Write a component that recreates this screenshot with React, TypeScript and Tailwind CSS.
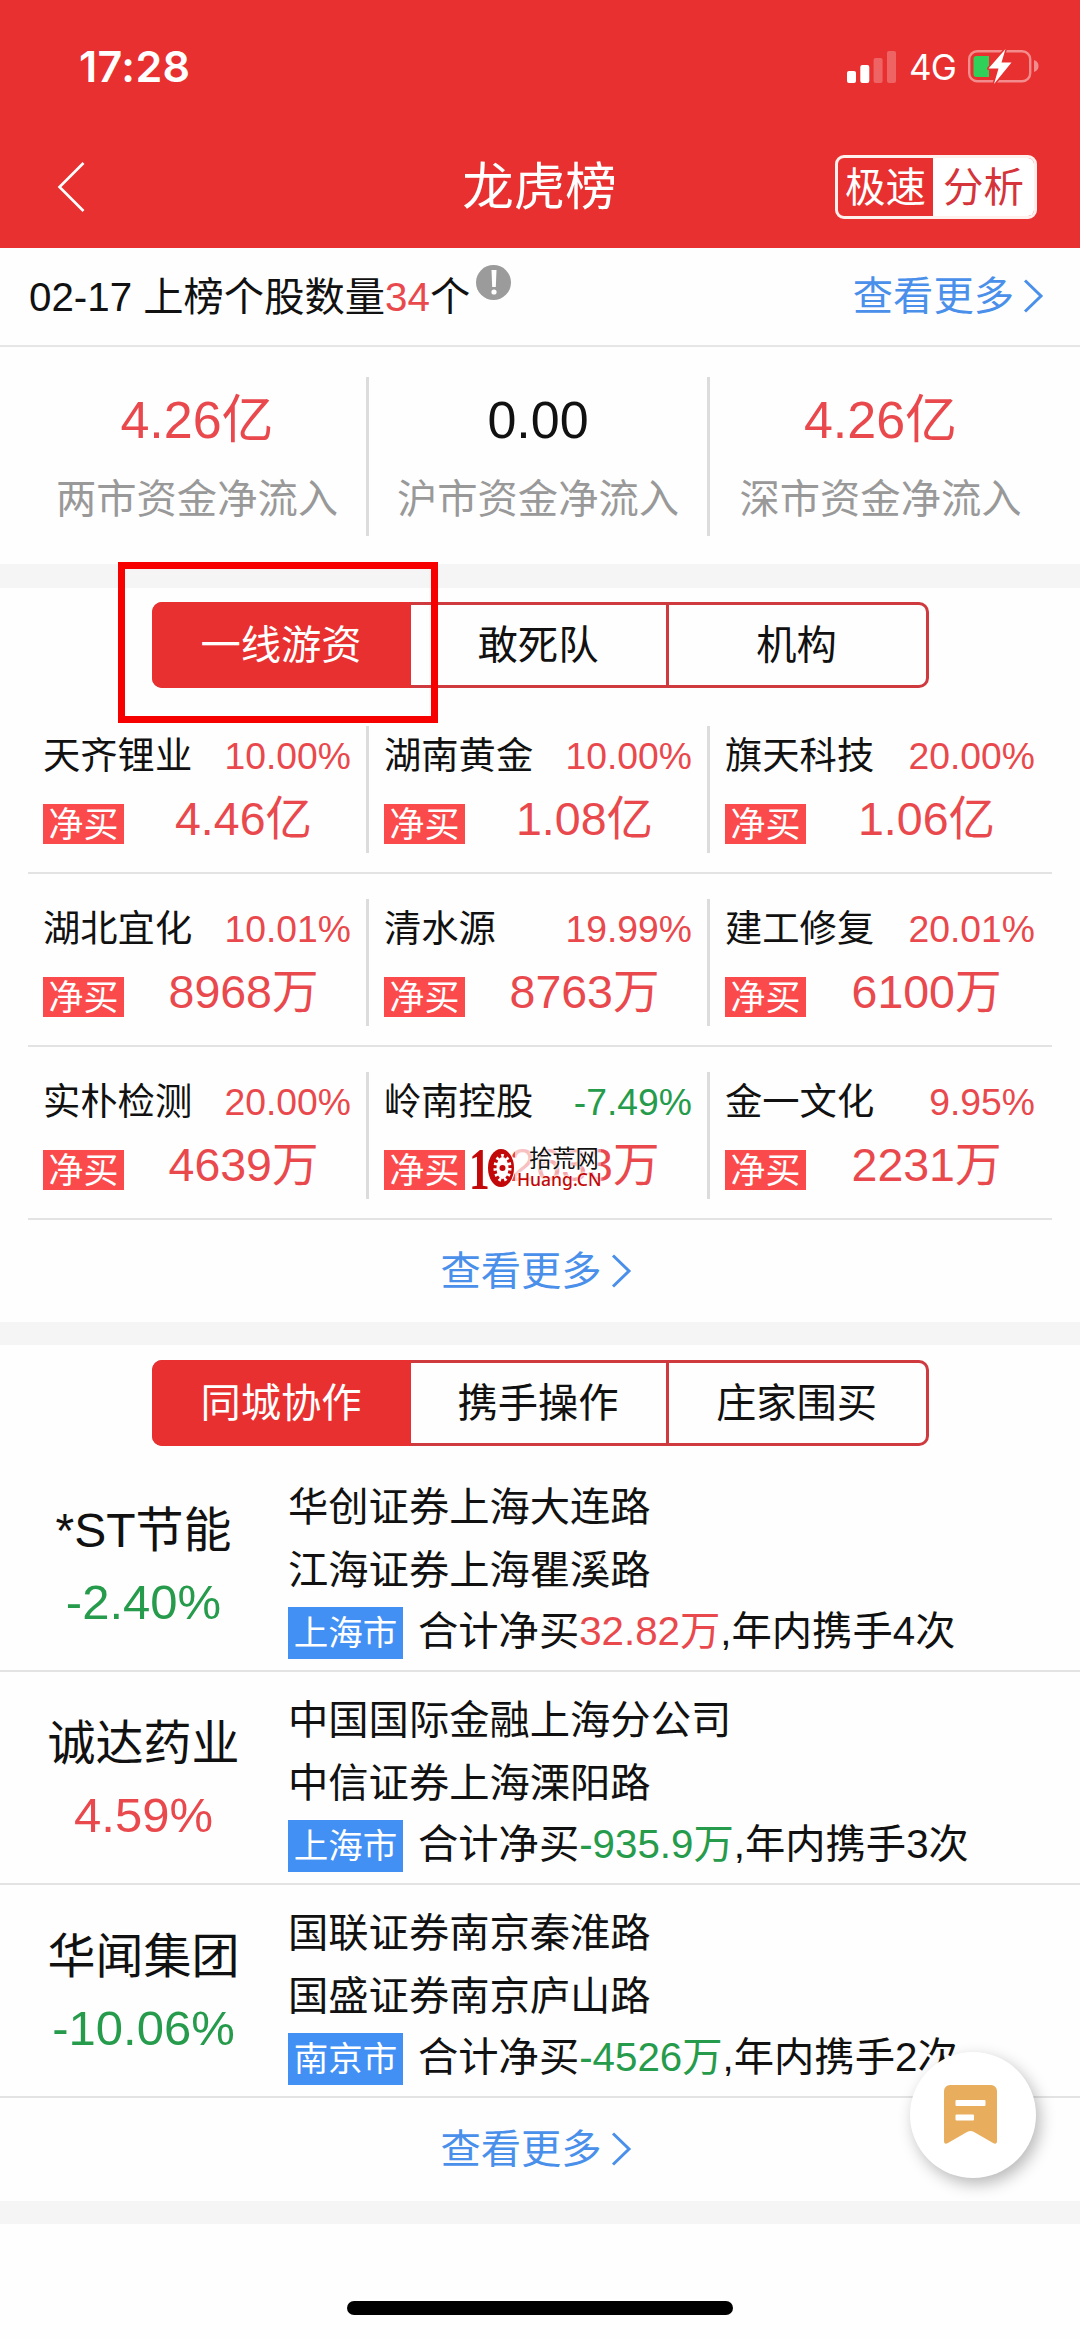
import { useState } from "react";
import clsx from "clsx";

type Stock = { name: string; change: string; amount: string };

type Partner = {
  name: string;
  change: string;
  brokers: string[];
  city: string;
  total: string;
  times: number;
};

const summary = [
  { label: "两市资金净流入", value: "4.26亿", up: true },
  { label: "沪市资金净流入", value: "0.00", up: false },
  { label: "深市资金净流入", value: "4.26亿", up: true },
];

const stockRows: Stock[][] = [
  [
    { name: "天齐锂业", change: "10.00%", amount: "4.46亿" },
    { name: "湖南黄金", change: "10.00%", amount: "1.08亿" },
    { name: "旗天科技", change: "20.00%", amount: "1.06亿" },
  ],
  [
    { name: "湖北宜化", change: "10.01%", amount: "8968万" },
    { name: "清水源", change: "19.99%", amount: "8763万" },
    { name: "建工修复", change: "20.01%", amount: "6100万" },
  ],
  [
    { name: "实朴检测", change: "20.00%", amount: "4639万" },
    { name: "岭南控股", change: "-7.49%", amount: "2633万" },
    { name: "金一文化", change: "9.95%", amount: "2231万" },
  ],
];

const partners: Partner[] = [
  {
    name: "*ST节能",
    change: "-2.40%",
    brokers: ["华创证券上海大连路", "江海证券上海瞿溪路"],
    city: "上海市",
    total: "32.82万",
    times: 4,
  },
  {
    name: "诚达药业",
    change: "4.59%",
    brokers: ["中国国际金融上海分公司", "中信证券上海溧阳路"],
    city: "上海市",
    total: "-935.9万",
    times: 3,
  },
  {
    name: "华闻集团",
    change: "-10.06%",
    brokers: ["国联证券南京秦淮路", "国盛证券南京庐山路"],
    city: "南京市",
    total: "-4526万",
    times: 2,
  },
];

const trend = (value: string) => (value.startsWith("-") ? "text-[#259b4b]" : "text-[#e9494d]");

function StatusBar() {
  return (
    <div className="flex h-[132px] items-center justify-between pl-[79px] pr-[40px] pt-px">
      <span className="font-['Inter',sans-serif] text-[43px] font-semibold leading-none tracking-[0.4px]">
        17:28
      </span>
      <div className="flex items-center">
        <svg width="49" height="32" viewBox="0 0 49 32" fill="#fff">
          <rect x="0" y="20" width="9" height="12" rx="2" />
          <rect x="13.3" y="14" width="9" height="18" rx="2" />
          <rect x="26.6" y="7" width="9" height="25" rx="2" opacity="0.25" />
          <rect x="40" y="0" width="9" height="32" rx="2" opacity="0.25" />
        </svg>
        <span className="ml-[13px] w-[59px] pt-[2px] font-['Inter',sans-serif] text-[35px] leading-none tracking-[-0.8px]">
          4G
        </span>
        <svg width="72" height="36" viewBox="0 0 72 36" fill="none">
          <rect x="1.2" y="2.2" width="61" height="30" rx="8" stroke="#fff" strokeOpacity="0.45" strokeWidth="2.4" />
          <path d="M66 11c3 1 4.500 3.200 4.500 6s-1.500 5-4.500 6z" fill="#fff" opacity="0.45" />
          <path d="M8.500 7H21v21H8.500a3 3 0 0 1-3-3V10a3 3 0 0 1 3-3z" fill="#30d158" />
          <path
            d="M37.500 0 20.500 19.500h10L26 35 43.500 13.500h-10z"
            fill="#fff"
            stroke="#e93030"
            strokeWidth="3"
            paintOrder="stroke"
            strokeLinejoin="round"
          />
        </svg>
      </div>
    </div>
  );
}

function Header() {
  return (
    <header className="h-[248px] bg-[#e93030] text-white">
      <StatusBar />
      <div className="flex h-[110px] items-center justify-between pl-[56px] pr-[43px]">
        <svg width="30" height="52" viewBox="0 0 30 52" fill="none" stroke="#fff" strokeWidth="2.600">
          <path d="M27.500 2 3.500 26l24 24" />
        </svg>
        <h1 className="ml-[158px] pt-[2px] text-[51.500px] leading-none">龙虎榜</h1>
        <div className="flex h-[64px] w-[202px] overflow-hidden rounded-[9px] border-[3px] border-[#fff0ee] text-[40.500px]">
          <span className="flex w-[95px] items-center justify-center whitespace-nowrap pt-[2px]">极速</span>
          <span className="flex flex-1 items-center justify-center bg-white pt-[2px] text-[#d4343a]">分析</span>
        </div>
      </div>
    </header>
  );
}

function MoreLink() {
  return (
    <a className="flex items-center text-[40.300px] leading-none text-[#4a90ea]">
      <span className="pt-[2px]">查看更多</span>
      <svg className="ml-[9px]" width="22" height="34" viewBox="0 0 22 34" fill="none" stroke="#4a90ea" strokeWidth="3">
        <path d="m2 1.500 16 15.500L2 32.500" />
      </svg>
    </a>
  );
}

function Tabs({ items }: { items: string[] }) {
  const [active, setActive] = useState(0);

  return (
    <div className="mx-auto grid h-[86px] w-[777px] grid-cols-[256px_255px_1fr] rounded-[10px] border-[3px] border-[#cf3a3f] text-[40.300px]">
      {items.map((item, i) => (
        <button
          key={item}
          onClick={() => setActive(i)}
          className={clsx(
            "flex items-center justify-center pt-[3px] leading-none",
            i > 1 && "border-l-[3px] border-[#cf3a3f] pr-[1px]",
            i === active
              ? "-my-[3px] bg-[#e93030] text-white first:-ml-[3px] first:rounded-l-[10px] last:-mr-[3px] last:rounded-r-[10px]"
              : "text-[#111]"
          )}
        >
          {item}
        </button>
      ))}
    </div>
  );
}

function StockCell({ stock }: { stock: Stock }) {
  return (
    <div className="h-[127px] w-[341px] border-r-[3px] border-[#dcdcdc] px-[15px] pt-[10px] last:border-transparent last:pr-[13px]">
      <div className="flex h-[40px] items-center justify-between text-[37.300px] leading-[41px]">
        <span>{stock.name}</span>
        <span className={trend(stock.change)}>{stock.change}</span>
      </div>
      <div className="-mr-[12px] mt-[28px] flex h-[40px]">
        <span className="flex h-[40px] w-[81px] items-center justify-center bg-[#fa4a4c] text-[35px] leading-none text-white">
          净买
        </span>
        <span className="-mt-[5px] flex-1 text-center text-[46.500px] leading-[40px] text-[#e9494d]">
          {stock.amount}
        </span>
      </div>
    </div>
  );
}

function PartnerRow({ partner }: { partner: Partner }) {
  return (
    <div className="flex h-[213px] border-b-2 border-[#e3e3e3]">
      <div className="w-[287px] pt-[47px] text-center">
        <div className="text-[48px] leading-[50px]">{partner.name}</div>
        <div className={clsx("mt-[21px] text-[49px] leading-[50px]", trend(partner.change))}>{partner.change}</div>
      </div>
      <div className="ml-px flex-1 pt-[17px] text-[40.300px] leading-[63px]">
        {partner.brokers.map((broker) => (
          <div key={broker}>{broker}</div>
        ))}
        <div className="mt-[5px] flex h-[52px]">
          <span className="mr-[15px] flex w-[115px] items-center justify-center bg-[#4390f5] pt-px text-[34.500px] leading-none text-white">
            {partner.city}
          </span>
          <span className="whitespace-nowrap leading-[49px]">
            合计净买<span className={trend(partner.total)}>{partner.total}</span>,年内携手{partner.times}次
          </span>
        </div>
      </div>
    </div>
  );
}

function Watermark() {
  return (
    <div className="absolute left-[472px] top-[447px] flex h-[46px] w-[132px]">
      <span className="-ml-[3px] w-[18px] origin-left scale-x-70 font-['Liberation_Serif',serif] text-[59px] font-bold leading-[42px] text-[#c20808] [text-shadow:0_0_3px_#fff]">
        1
      </span>
      <svg className="relative shrink-0" width="28" height="40" viewBox="0 0 28 40">
        <ellipse cx="14" cy="20" rx="14" ry="20" fill="#fff" />
        <ellipse cx="14" cy="20" rx="13" ry="19" fill="#c20808" />
        <ellipse cx="15.500" cy="20" rx="6" ry="11" fill="#fff" />
        <ellipse cx="15.500" cy="20" rx="7" ry="12" fill="none" stroke="#fff" strokeWidth="4" strokeDasharray="2.500 3" />
        <circle cx="15.500" cy="20" r="3" fill="#c20808" />
      </svg>
      <div className="relative -mt-[1px] h-[42px] whitespace-nowrap bg-linear-to-r from-white/70 to-white/30">
        <div className="pl-[14px] text-[23.300px] leading-[24px] [text-shadow:0_0_2px_#fff,0_0_3px_#fff,0_0_4px_#fff]">
          拾荒网
        </div>
        <div className="pl-[2px] font-['Noto_Sans',sans-serif] text-[17.500px] font-medium leading-[16px] text-[#c20808] [text-shadow:0_0_2px_#fff,0_0_3px_#fff,0_0_4px_#fff]">
          Huang.CN
        </div>
      </div>
    </div>
  );
}

export default function App() {
  return (
    <div className="relative flex h-[2339px] w-[1080px] flex-col overflow-hidden bg-[#fefefe] font-['Liberation_Sans','Noto_Sans_CJK_SC',sans-serif] text-[#111]">
      <Header />

      {/* Summary */}
      <div className="flex h-[99px] items-center justify-between border-b-2 border-[#e6e6e6] pl-[29px] pr-[35px]">
        <div className="flex items-center text-[40.300px] leading-none">
          <span className="whitespace-pre pt-[3px]">
            02-17 上榜个股数量<span className="text-[#e9494d]">34</span>个
          </span>
          <span className="mb-[29px] ml-[6px] flex h-[35px] w-[35px] items-center justify-center rounded-full bg-[#9b9b9b]">
            <svg width="6" height="25" viewBox="0 0 6 25" fill="#fff">
              <path d="M.5 0h5l-.7 17H1.200z" />
              <circle cx="3" cy="22" r="2.600" />
            </svg>
          </span>
        </div>
        <MoreLink />
      </div>
      <div className="flex h-[217px] pl-[28px] pt-[30px]">
        {summary.map((item) => (
          <div
            key={item.label}
            className="h-[159px] w-[341px] border-r-[3px] border-[#dcdcdc] pt-[18px] text-center last:w-[344px] last:border-transparent"
          >
            <div className={clsx("text-[52px] leading-[50px]", item.up ? "text-[#e9494d]" : "text-[#111]")}>
              {item.value}
            </div>
            <div className="mt-[30px] text-[40.300px] leading-[50px] text-[#999]">{item.label}</div>
          </div>
        ))}
      </div>
      <div className="h-[24px] bg-[#f5f5f5]" />

      {/* Net buying */}
      <section className="relative h-[113px] pt-[14px]">
        <Tabs items={["一线游资", "敢死队", "机构"]} />
        <div className="absolute left-[118px] top-[-26px] h-[161px] w-[320px] border-[7px] border-[#f60000]" />
      </section>
      <section className="relative">
        {stockRows.map((row, i) => (
          <div key={i} className="ml-[28px] mr-[28px] flex h-[173px] border-b-2 border-[#e3e3e3] pt-[25px]">
            {row.map((stock) => (
              <StockCell key={stock.name} stock={stock} />
            ))}
          </div>
        ))}
        <Watermark />
      </section>
      <div className="flex h-[102px] items-center justify-center pr-[7px]">
        <MoreLink />
      </div>
      <div className="h-[23px] bg-[#f5f5f5]" />

      {/* Joint trading */}
      <section className="pt-[15px]">
        <Tabs items={["同城协作", "携手操作", "庄家围买"]} />
        <div className="mt-[13px]">
          {partners.map((partner) => (
            <PartnerRow key={partner.name} partner={partner} />
          ))}
        </div>
      </section>
      <div className="flex h-[103px] items-center justify-center pr-[7px]">
        <MoreLink />
      </div>
      <div className="h-[23px] bg-[#f5f5f5]" />
      <div className="mx-auto mt-[77px] h-[14px] w-[386px] rounded-full bg-black" />

      {/* Floating note button */}
      <button className="absolute left-[910px] top-[2052px] flex h-[126px] w-[126px] items-center justify-center rounded-full bg-white shadow-[4px_6px_16px_rgba(0,0,0,0.28)]">
        <svg className="-ml-[5px]" width="53" height="60" viewBox="0 0 53 60">
          <path
            d="M6 0h41a6 6 0 0 1 6 6v50c0 2.500-1.500 3.200-3.500 2.200L30 47c-2.500-1.400-4.500-1.400-7 0L3.500 58.200C1.500 59.200 0 58.500 0 56V6a6 6 0 0 1 6-6z"
            fill="#e8ae5e"
          />
          <rect x="11.500" y="15" width="30" height="6" rx="1" fill="#fff" />
          <rect x="11.500" y="29.500" width="18.500" height="6" rx="1" fill="#fff" />
        </svg>
      </button>
    </div>
  );
}
